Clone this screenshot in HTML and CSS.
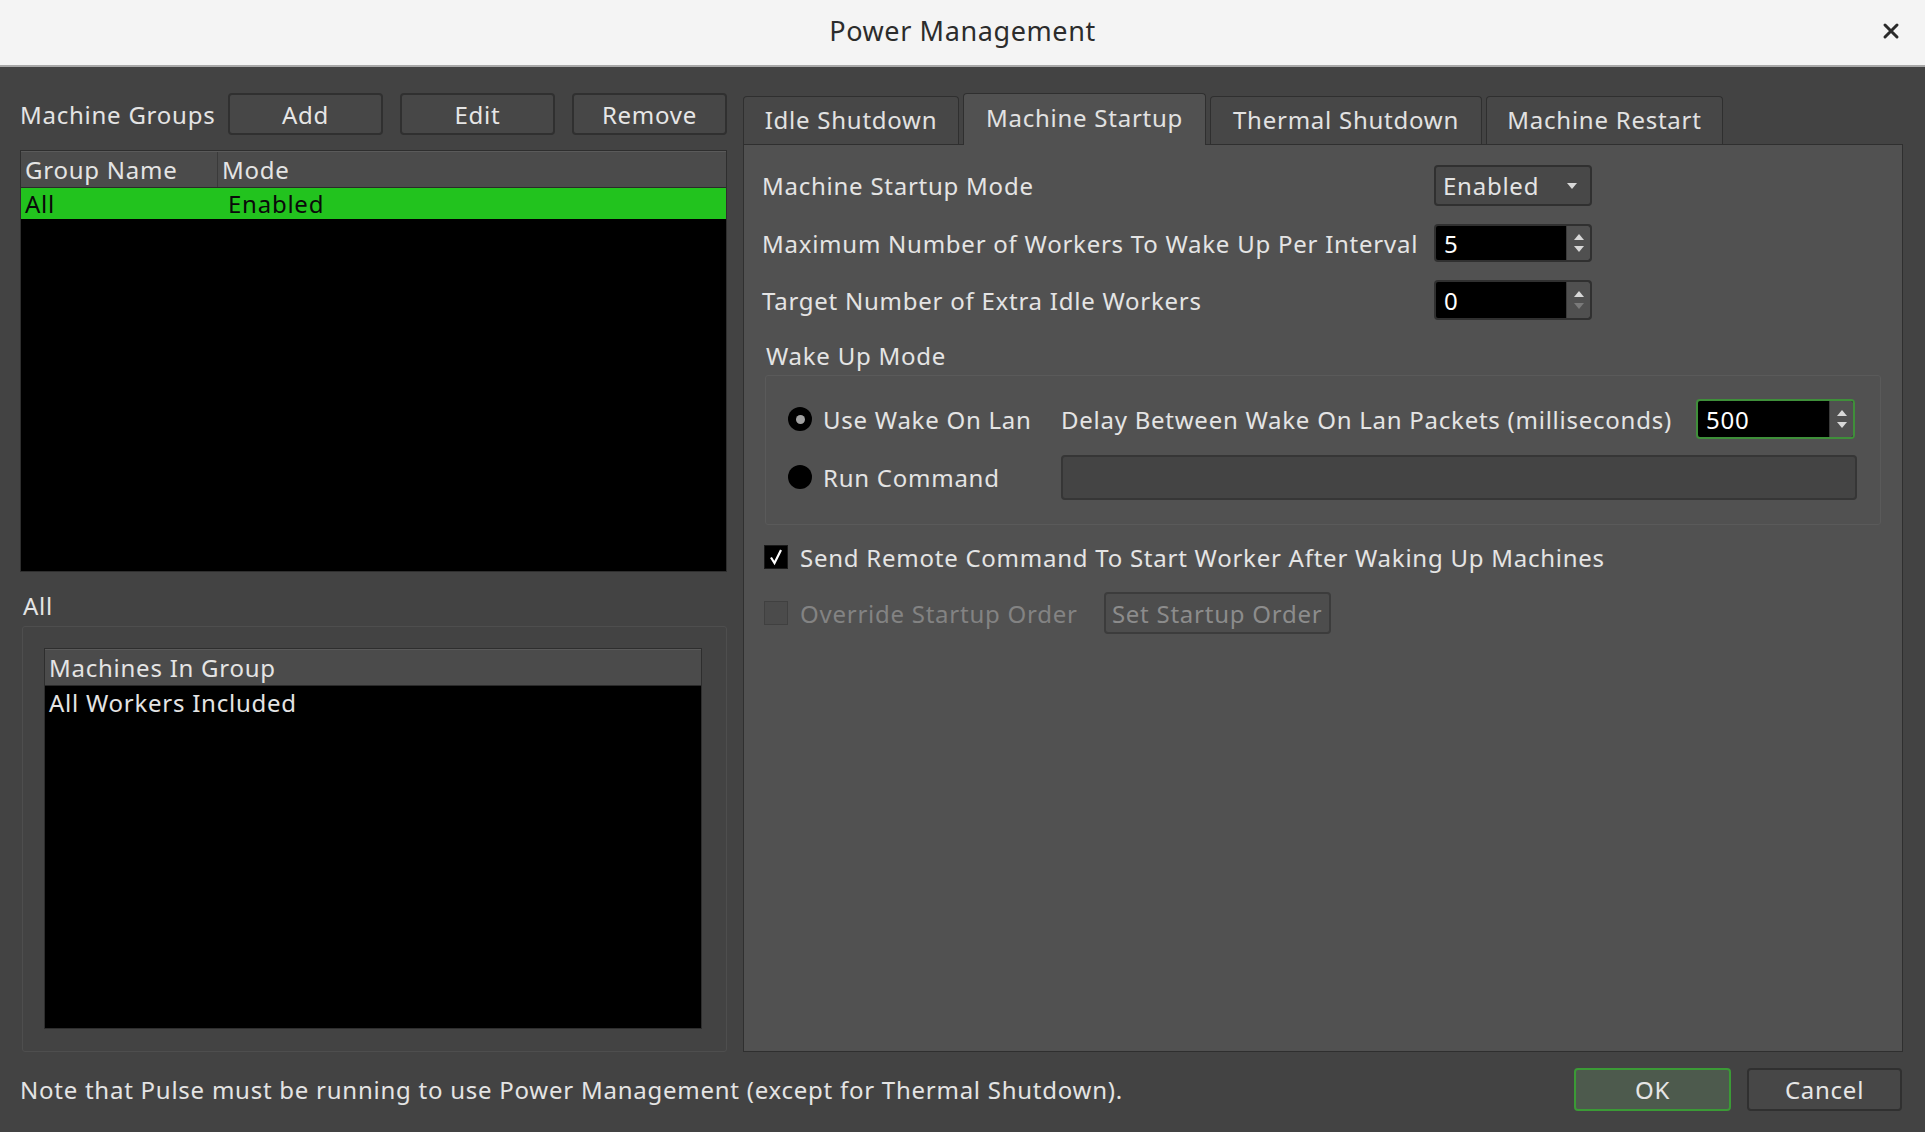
FILE: index.html
```html
<!DOCTYPE html>
<html>
<head>
<meta charset="utf-8">
<title>Power Management</title>
<link rel="stylesheet" href="styles.css">
</head>
<body>
<div class="window">
  <header class="titlebar">
    <span class="title">Power Management</span>
    <span class="close"><svg width="18" height="18" viewBox="0 0 18 18"><path d="M3 3 L15 15 M15 3 L3 15" stroke="#2a2a2a" stroke-width="3" stroke-linecap="round"/></svg></span>
  </header>
  <div class="content">
    <div class="columns">
      <section class="left">
        <div class="toolbar">
          <span class="lbl">Machine Groups</span>
          <button class="btn">Add</button>
          <button class="btn">Edit</button>
          <button class="btn">Remove</button>
        </div>
        <div class="table groups">
          <div class="thead">
            <div class="th c1">Group Name</div>
            <div class="th">Mode</div>
          </div>
          <div class="trow sel">
            <div class="td c1">All</div>
            <div class="td">Enabled</div>
          </div>
        </div>
        <div class="group-label">All</div>
        <div class="groupbox machines-box">
          <div class="table machines">
            <div class="thead"><div class="th">Machines In Group</div></div>
            <div class="trow"><div class="td">All Workers Included</div></div>
          </div>
        </div>
      </section>
      <section class="right">
        <div class="tabs">
          <div class="tab t1">Idle Shutdown</div>
          <div class="tab t2 active">Machine Startup</div>
          <div class="tab t3">Thermal Shutdown</div>
          <div class="tab t4">Machine Restart</div>
        </div>
        <div class="pane">
          <div class="form">
            <span class="flabel">Machine Startup Mode</span>
            <div class="combo"><span>Enabled</span><svg width="12" height="8" viewBox="0 0 12 8"><path d="M1 1 L11 1 L6 7 Z" fill="#d8d8d8"/></svg></div>
            <span class="flabel">Maximum Number of Workers To Wake Up Per Interval</span>
            <div class="spin"><span class="val">5</span><span class="arrows"><svg width="12" height="24" viewBox="0 0 12 24"><path d="M1 9 L11 9 L6 3 Z" fill="#d8d8d8"/><path d="M1 15 L11 15 L6 21 Z" fill="#d8d8d8"/></svg></span></div>
            <span class="flabel">Target Number of Extra Idle Workers</span>
            <div class="spin"><span class="val">0</span><span class="arrows"><svg width="12" height="24" viewBox="0 0 12 24"><path d="M1 9 L11 9 L6 3 Z" fill="#d8d8d8"/><path d="M1 15 L11 15 L6 21 Z" fill="#7a7a7a"/></svg></span></div>
          </div>
          <div class="wake-label">Wake Up Mode</div>
          <div class="groupbox wake-box">
            <div class="wake-row r1">
              <label class="radio"><span class="dot on"></span>Use Wake On Lan</label>
              <div class="delay">
                <span>Delay Between Wake On Lan Packets (milliseconds)</span>
                <div class="spin focus"><span class="val">500</span><span class="arrows"><svg width="12" height="24" viewBox="0 0 12 24"><path d="M1 9 L11 9 L6 3 Z" fill="#d8d8d8"/><path d="M1 15 L11 15 L6 21 Z" fill="#d8d8d8"/></svg></span></div>
              </div>
            </div>
            <div class="wake-row r2">
              <label class="radio"><span class="dot"></span>Run Command</label>
              <div class="field"></div>
            </div>
          </div>
          <div class="check-row">
            <span class="check on"><svg width="16" height="18" viewBox="0 0 16 18"><path d="M3 9.5 L6.5 15 L13 2" stroke="#ffffff" stroke-width="2.2" fill="none"/></svg></span>
            <span>Send Remote Command To Start Worker After Waking Up Machines</span>
          </div>
          <div class="check-row disabled">
            <span class="check"></span>
            <span>Override Startup Order</span>
            <button class="btn order">Set Startup Order</button>
          </div>
        </div>
      </section>
    </div>
    <footer class="footer">
      <span class="note">Note that Pulse must be running to use Power Management (except for Thermal Shutdown).</span>
      <div class="actions">
        <button class="btn ok">OK</button>
        <button class="btn cancel">Cancel</button>
      </div>
    </footer>
  </div>
</div>
</body>
</html>
```
FILE: styles.css
```css
* { box-sizing: border-box; }
html, body {
  margin: 0;
  padding: 0;
  width: 1925px;
  height: 1132px;
  overflow: hidden;
  background: #434343;
  font-family: "Noto Sans", "Open Sans", sans-serif;
  font-size: 24px;
  letter-spacing: 0.75px;
  color: #e4e4e4;
}
.window {
  width: 1925px;
  height: 1132px;
  display: flex;
  flex-direction: column;
}
.titlebar {
  height: 67px;
  flex: none;
  background: #f4f4f4;
  border-bottom: 2px solid #a8a8a8;
  display: flex;
  align-items: center;
  justify-content: center;
  position: relative;
}
.title {
  font-size: 27px;
  letter-spacing: 0.6px;
  color: #2c2c2c;
  margin-top: -5px;
}
.close {
  position: absolute;
  right: 25px;
  top: 22px;
  width: 18px;
  height: 18px;
  display: flex;
}
.content {
  flex: 1;
  display: flex;
  flex-direction: column;
  padding: 26px 22px 21px 20px;
}
.columns {
  display: flex;
  gap: 16px;
  height: 959px;
}
.left {
  width: 707px;
  display: flex;
  flex-direction: column;
}
.toolbar {
  display: grid;
  grid-template-columns: minmax(0, 1fr) 155px 155px 155px;
  column-gap: 17px;
  align-items: center;
  height: 42px;
}
.lbl { white-space: nowrap; }
.btn {
  font-family: inherit;
  font-size: 24px;
  letter-spacing: 0.75px;
  color: #e6e6e6;
  background: #474747;
  border: 2px solid #303030;
  border-radius: 4px;
  height: 42px;
  padding: 0 6px;
  cursor: default;
}
.table {
  background: #000;
  border: 1px solid #2e2e2e;
}
.groups {
  margin-top: 15px;
  height: 422px;
}
.thead {
  display: flex;
  height: 37px;
  background: #4b4b4b;
  border-bottom: 1px solid #2a2a2a;
  border-top: 1px solid #5a5a5a;
}
.th {
  padding: 0 4px;
  display: flex;
  align-items: center;
  line-height: 1;
}
.th.c1, .td.c1 {
  width: 197px;
  flex: none;
}
.th.c1 { border-right: 1px solid #3a3a3a; }
.trow {
  display: flex;
  height: 31px;
  align-items: center;
}
.trow.sel {
  background: #22c31e;
  color: #0a0a0a;
}
.td { padding: 0 4px; }
.trow.sel .td + .td { padding-left: 10px; }
.group-label {
  height: 54px;
  display: flex;
  align-items: flex-end;
  padding-left: 3px;
  padding-bottom: 4px;
}
.groupbox {
  border: 1px solid #4e4e4e;
  border-radius: 3px;
}
.machines-box {
  flex: 1;
  margin-left: 2px;
  padding: 21px 24px 22px 21px;
  display: flex;
}
.machines {
  flex: 1;
}
.machines .th, .machines .td { padding-left: 4px; }
.machines .trow { height: 32px; }
.right {
  flex: 1;
  display: flex;
  flex-direction: column;
}
.tabs {
  display: flex;
  align-items: flex-end;
  height: 51px;
  gap: 4px;
  position: relative;
  z-index: 1;
}
.tab {
  height: 48px;
  background: #474747;
  border: 1px solid #2f2f2f;
  border-bottom: none;
  border-radius: 4px 4px 0 0;
  display: flex;
  align-items: center;
  justify-content: center;
  padding-bottom: 2px;
  color: #e2e2e2;
}
.t1 { width: 216px; }
.t2 { width: 243px; }
.t3 { width: 272px; }
.t4 { width: 237px; }
.tab.active {
  height: 52px;
  background: #515151;
  margin-bottom: -1px;
  padding-bottom: 4px;
}
.pane {
  flex: 1;
  background: #515151;
  border: 1px solid #2f2f2f;
  padding: 20px 21px 0 18px;
}
.form {
  display: grid;
  grid-template-columns: 672px 158px;
  grid-template-rows: 41px 38px 40px;
  row-gap: 18px;
  align-items: center;
}
.flabel { white-space: nowrap; }
.combo {
  height: 41px;
  background: #484848;
  border: 2px solid #303030;
  border-radius: 4px;
  display: flex;
  align-items: center;
  justify-content: space-between;
  padding: 0 12px 0 7px;
}
.spin {
  height: 100%;
  display: flex;
  background: #000;
  border: 2px solid #303030;
  border-radius: 4px;
  overflow: hidden;
}
.spin .val {
  flex: 1;
  display: flex;
  align-items: center;
  padding-left: 8px;
  color: #fff;
}
.spin .arrows {
  width: 24px;
  background: #505050;
  display: flex;
  align-items: center;
  justify-content: center;
  border-left: 1px solid #3a3a3a;
}
.spin.focus {
  border-color: #3f8f3a;
}
.wake-label {
  margin-top: 21px;
  margin-left: 4px;
  height: 30px;
  line-height: 30px;
}
.wake-box {
  margin: 4px 0 0 3px;
  padding: 23px 23px 24px 22px;
  border-color: #5a5a5a;
  display: flex;
  flex-direction: column;
  gap: 15px;
}
.wake-row {
  display: grid;
  grid-template-columns: 273px 1fr;
  align-items: center;
}
.wake-row.r1 { height: 40px; }
.wake-row.r2 { height: 46px; }
.radio {
  display: flex;
  align-items: center;
  gap: 11px;
  white-space: nowrap;
}
.dot {
  width: 24px;
  height: 24px;
  border-radius: 50%;
  background: #000;
  display: flex;
  align-items: center;
  justify-content: center;
  flex: none;
}
.dot.on::after {
  content: "";
  width: 9px;
  height: 9px;
  border-radius: 50%;
  background: #a0a0a0;
}
.delay {
  display: flex;
  align-items: center;
  justify-content: space-between;
  height: 40px;
}
.delay .spin {
  width: 159px;
  height: 40px;
  margin-right: 2px;
}
.field {
  height: 45px;
  background: #444444;
  border: 2px solid #363636;
  border-radius: 4px;
}
.check-row {
  display: flex;
  align-items: center;
  gap: 12px;
  margin-left: 2px;
  white-space: nowrap;
}
.wake-box + .check-row { margin-top: 20px; height: 24px; }
.check-row.disabled { margin-top: 23px; height: 42px; color: #838383; }
.check {
  width: 24px;
  height: 24px;
  background: #4b4b4b;
  border: 1px solid #404040;
  display: flex;
  align-items: center;
  justify-content: center;
  flex: none;
}
.check.on { background: #000; border-color: #1a1a1a; }
.btn.order {
  margin-left: 14px;
  width: 227px;
  height: 42px;
  background: #4d4d4d;
  border-color: #3c3c3c;
  color: #8c8c8c;
  padding: 0;
}
.footer {
  display: flex;
  align-items: center;
  justify-content: space-between;
  margin-top: 16px;
  height: 43px;
}
.actions {
  display: flex;
  gap: 16px;
  margin-right: 1px;
}
.btn.ok {
  width: 157px;
  height: 43px;
  background: #4d5a4d;
  border-color: #3b9a36;
}
.btn.cancel {
  width: 155px;
  height: 43px;
}
```
